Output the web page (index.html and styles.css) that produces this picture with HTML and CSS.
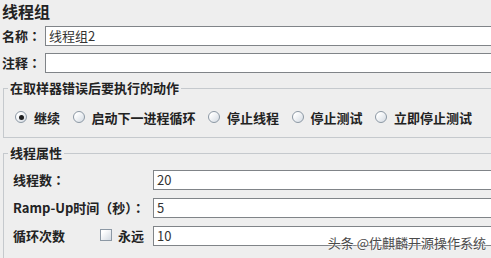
FILE: index.html
```html
<!DOCTYPE html>
<html lang="zh-CN">
<head>
  <meta charset="UTF-8" />
  <meta name="viewport" content="width=device-width, initial-scale=1.0" />
  <title>线程组</title>
  <link rel="stylesheet" href="styles.css">
</head>
<body>
  <div class="panel">
    <h1 class="title">线程组</h1>

    <div class="field-row">
      <label class="label">名称<span class="colon" lang="zh-TW">：</span></label>
      <div class="input">线程组2</div>
    </div>
    <div class="field-row comment">
      <label class="label">注释<span class="colon" lang="zh-TW">：</span></label>
      <div class="input"></div>
    </div>

    <fieldset class="group">
      <legend>在取样器错误后要执行的动作</legend>
      <div class="radios">
        <div class="choice"><span class="radio on"></span>继续</div>
        <div class="choice"><span class="radio"></span>启动下一进程循环</div>
        <div class="choice"><span class="radio"></span>停止线程</div>
        <div class="choice"><span class="radio"></span>停止测试</div>
        <div class="choice"><span class="radio"></span>立即停止测试</div>
      </div>
    </fieldset>

    <fieldset class="group props">
      <legend>线程属性</legend>
      <div class="prop-grid">
        <label class="prop-label">线程数<span class="colon" lang="zh-TW">：</span></label>
        <div class="input">20</div>

        <label class="prop-label">Ramp-Up时间<span class="colon" lang="zh-TW">（</span>秒<span class="colon" lang="zh-TW">）：</span></label>
        <div class="input">5</div>

        <div class="prop-label loop">
          <span class="loop-text">循环次数</span>
          <span class="checkbox"></span>
          <span>永远</span>
        </div>
        <div class="input">10</div>
      </div>
    </fieldset>
  </div>

  <div class="watermark">头条 @优麒麟开源操作系统</div>
</body>
</html>
```

FILE: styles.css
```css
* {
  box-sizing: border-box;
}
body {
  margin: 0;
  width: 491px;
  height: 258px;
  overflow: hidden;
  position: relative;
  background: #eeeeee;
  color: #222;
  font-family: "Noto Sans CJK SC", "Liberation Sans", sans-serif;
  font-size: 13px;
}
.title {
  margin: 0;
  height: 23px;
  padding-left: 2px;
  font-size: 16px;
  font-weight: bold;
  line-height: 23px;
}
.colon {
  font-family: "Noto Sans CJK TC", sans-serif;
}
.field-row {
  display: flex;
  align-items: center;
  height: 20px;
  margin-top: 3px;
}
.field-row.comment {
  margin-top: 7px;
}
.label {
  width: 45px;
  padding-left: 2px;
  font-weight: bold;
  line-height: 20px;
  white-space: nowrap;
}
.input {
  flex: 1;
  height: 20px;
  border: 1px solid #808488;
  border-right: none;
  background: #fff;
  padding-left: 3px;
  line-height: 18px;
  color: #333;
  white-space: nowrap;
}

/* Gruppen */
.group {
  margin: 8px -10px 0 3px;
  padding: 0 0 12px 4px;
  min-width: 0;
  border: 1px solid #c5c9cd;
}
.group legend {
  padding: 0 2px;
  font-weight: bold;
  line-height: 14px;
}
.radios {
  display: flex;
  align-items: center;
  gap: 12.5px;
  height: 16px;
  margin-top: 14px;
  padding-left: 7px;
  font-weight: bold;
}
.choice {
  display: flex;
  align-items: center;
  gap: 7px;
  white-space: nowrap;
}
.radio {
  position: relative;
  width: 12px;
  height: 12px;
  border-radius: 50%;
  border: 1px solid #8c98a4;
  background: linear-gradient(135deg, #ffffff 20%, #d3dae2);
}
.radio.on::after {
  content: "";
  position: absolute;
  top: 2.5px;
  left: 2.5px;
  width: 5px;
  height: 5px;
  border-radius: 50%;
  background: #1e1e1e;
}

.props {
  padding-bottom: 20px;
}
.prop-grid {
  display: grid;
  grid-template-columns: 145px 1fr;
  row-gap: 8px;
  margin-top: 10px;
}
.prop-label {
  padding-left: 5px;
  font-weight: bold;
  line-height: 20px;
  white-space: nowrap;
}
.prop-label.loop {
  display: flex;
  align-items: center;
}
.loop-text {
  width: 87px;
}
.checkbox {
  width: 12px;
  height: 12px;
  margin: 0 6px 2px 0;
  border: 1px solid #8c98a4;
  background: linear-gradient(135deg, #ffffff 20%, #d3dae2);
}

.watermark {
  position: absolute;
  right: 5px;
  bottom: 7px;
  font-size: 13px;
  line-height: 16px;
  color: #4a4a4a;
  text-shadow: 0 0 2px #fff, 0 0 2px #fff;
}
```
